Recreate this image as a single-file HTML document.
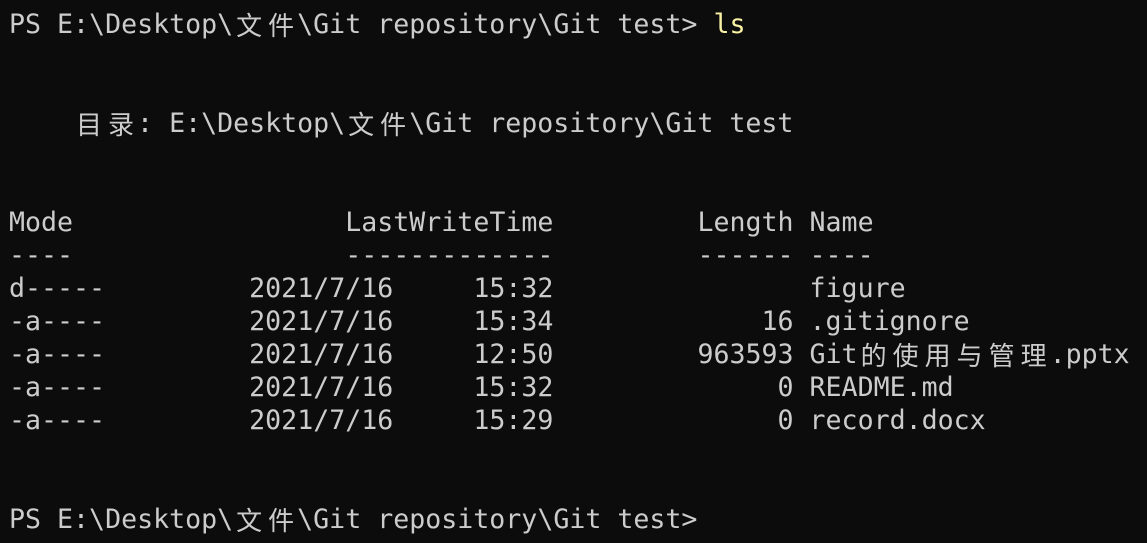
<!DOCTYPE html>
<html><head><meta charset="utf-8"><style>
html,body{margin:0;padding:0;background:#0c0c0c;width:1147px;height:543px;overflow:hidden}
pre{margin:0;position:absolute;left:9px;top:8px;font-family:"DejaVu Sans Mono","Liberation Mono","Noto Sans CJK SC",monospace;font-size:26.6px;line-height:33px;color:#cccccc;white-space:pre}
.l{display:block;height:33px;line-height:33px;overflow:visible}
.c{display:inline-block;width:32px;height:33px;line-height:33px;vertical-align:top;text-align:center;font-family:"Noto Sans CJK SC",sans-serif;font-size:26px}
.y{color:#f9f1a5}
</style></head><body>
<pre><span class="l">PS E:\Desktop\<span class="c">文</span><span class="c">件</span>\Git repository\Git test&gt; <span class="y">ls</span></span><span class="l"> </span><span class="l"> </span><span class="l">    <span class="c">目</span><span class="c">录</span>: E:\Desktop\<span class="c">文</span><span class="c">件</span>\Git repository\Git test</span><span class="l"> </span><span class="l"> </span><span class="l">Mode                 LastWriteTime         Length Name</span><span class="l">----                 -------------         ------ ----</span><span class="l">d-----         2021/7/16     15:32                figure</span><span class="l">-a----         2021/7/16     15:34             16 .gitignore</span><span class="l">-a----         2021/7/16     12:50         963593 Git<span class="c">的</span><span class="c">使</span><span class="c">用</span><span class="c">与</span><span class="c">管</span><span class="c">理</span>.pptx</span><span class="l">-a----         2021/7/16     15:32              0 README.md</span><span class="l">-a----         2021/7/16     15:29              0 record.docx</span><span class="l"> </span><span class="l"> </span><span class="l">PS E:\Desktop\<span class="c">文</span><span class="c">件</span>\Git repository\Git test&gt;</span></pre>
</body></html>
